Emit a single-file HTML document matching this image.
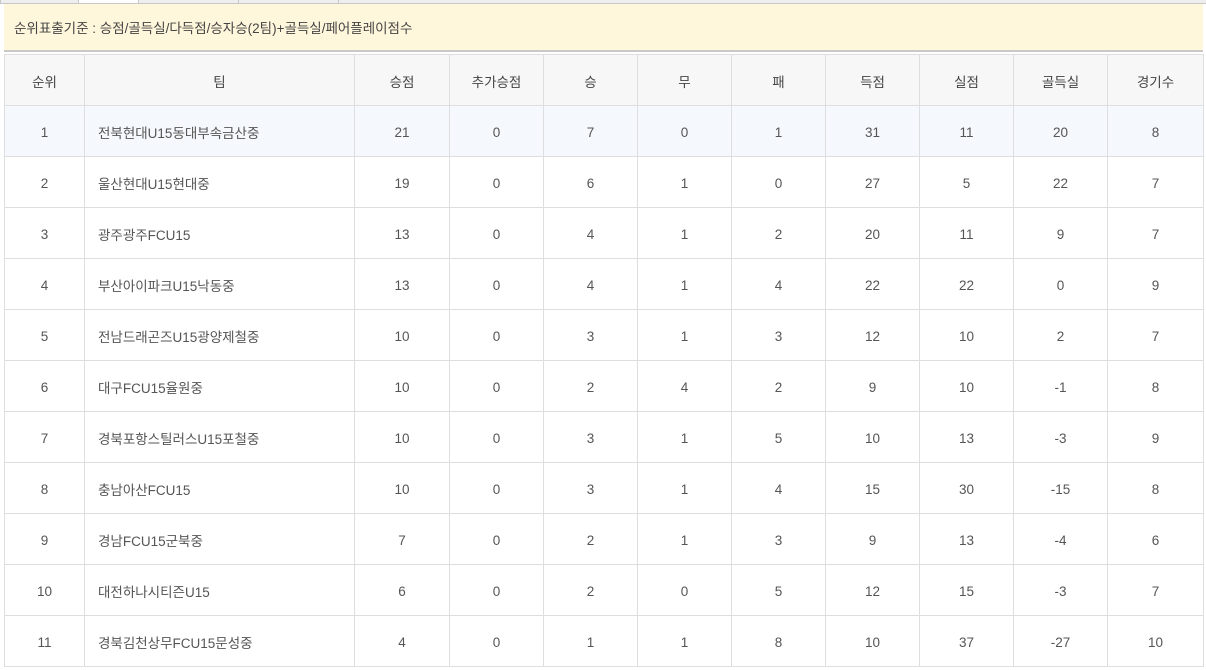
<!DOCTYPE html>
<html><head><meta charset="utf-8"><style>
body{margin:0;width:1206px;height:670px;background:#fff;overflow:hidden;font-family:"Liberation Sans","Noto Sans CJK KR",sans-serif;font-size:13.5px;color:#555}
.tabs{position:absolute;left:0;top:0;width:1206px;height:3px;border-bottom:1px solid #c8c8c8;background:#eee}
.tab{position:absolute;top:0;height:3px;border-left:1px solid #c8c8c8}
.banner{position:absolute;left:4px;top:4px;width:1199px;height:48px;background:#fff7dc;border-bottom:2px solid #c9c9c9;line-height:50px;box-sizing:border-box;padding-left:10px;color:#444}
table{position:absolute;left:4px;top:54px;border-collapse:collapse;table-layout:fixed;width:1200px}
td,th{border:1px solid #dedede;height:48px;text-align:center;font-weight:normal;padding:2px 0 0 0}
th{background:#f7f7f7;color:#444}
td.t{text-align:left;padding-left:13px}
tr.h td{background:#f5f8fc}
</style></head><body>
<div class="tabs"><div class="tab" style="left:0;width:77px;background:#eee"></div><div class="tab" style="left:78px;width:60px;background:#fff"></div><div class="tab" style="left:138px;width:100px"></div><div class="tab" style="left:238px;width:100px"></div><div class="tab" style="left:338px;width:100px"></div></div>
<div class="banner">순위표출기준 : 승점/골득실/다득점/승자승(2팀)+골득실/페어플레이점수</div>
<table>
<colgroup><col style="width:80px"><col style="width:270px"><col style="width:95px"><col style="width:94px"><col style="width:94px"><col style="width:94px"><col style="width:94px"><col style="width:94px"><col style="width:94px"><col style="width:94px"><col style="width:96px"></colgroup>
<tr><th>순위</th><th>팀</th><th>승점</th><th>추가승점</th><th>승</th><th>무</th><th>패</th><th>득점</th><th>실점</th><th>골득실</th><th>경기수</th></tr>
<tr class="h"><td>1</td><td class="t">전북현대U15동대부속금산중</td><td>21</td><td>0</td><td>7</td><td>0</td><td>1</td><td>31</td><td>11</td><td>20</td><td>8</td></tr>
<tr><td>2</td><td class="t">울산현대U15현대중</td><td>19</td><td>0</td><td>6</td><td>1</td><td>0</td><td>27</td><td>5</td><td>22</td><td>7</td></tr>
<tr><td>3</td><td class="t">광주광주FCU15</td><td>13</td><td>0</td><td>4</td><td>1</td><td>2</td><td>20</td><td>11</td><td>9</td><td>7</td></tr>
<tr><td>4</td><td class="t">부산아이파크U15낙동중</td><td>13</td><td>0</td><td>4</td><td>1</td><td>4</td><td>22</td><td>22</td><td>0</td><td>9</td></tr>
<tr><td>5</td><td class="t">전남드래곤즈U15광양제철중</td><td>10</td><td>0</td><td>3</td><td>1</td><td>3</td><td>12</td><td>10</td><td>2</td><td>7</td></tr>
<tr><td>6</td><td class="t">대구FCU15율원중</td><td>10</td><td>0</td><td>2</td><td>4</td><td>2</td><td>9</td><td>10</td><td>-1</td><td>8</td></tr>
<tr><td>7</td><td class="t">경북포항스틸러스U15포철중</td><td>10</td><td>0</td><td>3</td><td>1</td><td>5</td><td>10</td><td>13</td><td>-3</td><td>9</td></tr>
<tr><td>8</td><td class="t">충남아산FCU15</td><td>10</td><td>0</td><td>3</td><td>1</td><td>4</td><td>15</td><td>30</td><td>-15</td><td>8</td></tr>
<tr><td>9</td><td class="t">경남FCU15군북중</td><td>7</td><td>0</td><td>2</td><td>1</td><td>3</td><td>9</td><td>13</td><td>-4</td><td>6</td></tr>
<tr><td>10</td><td class="t">대전하나시티즌U15</td><td>6</td><td>0</td><td>2</td><td>0</td><td>5</td><td>12</td><td>15</td><td>-3</td><td>7</td></tr>
<tr><td>11</td><td class="t">경북김천상무FCU15문성중</td><td>4</td><td>0</td><td>1</td><td>1</td><td>8</td><td>10</td><td>37</td><td>-27</td><td>10</td></tr>
</table>
</body></html>
